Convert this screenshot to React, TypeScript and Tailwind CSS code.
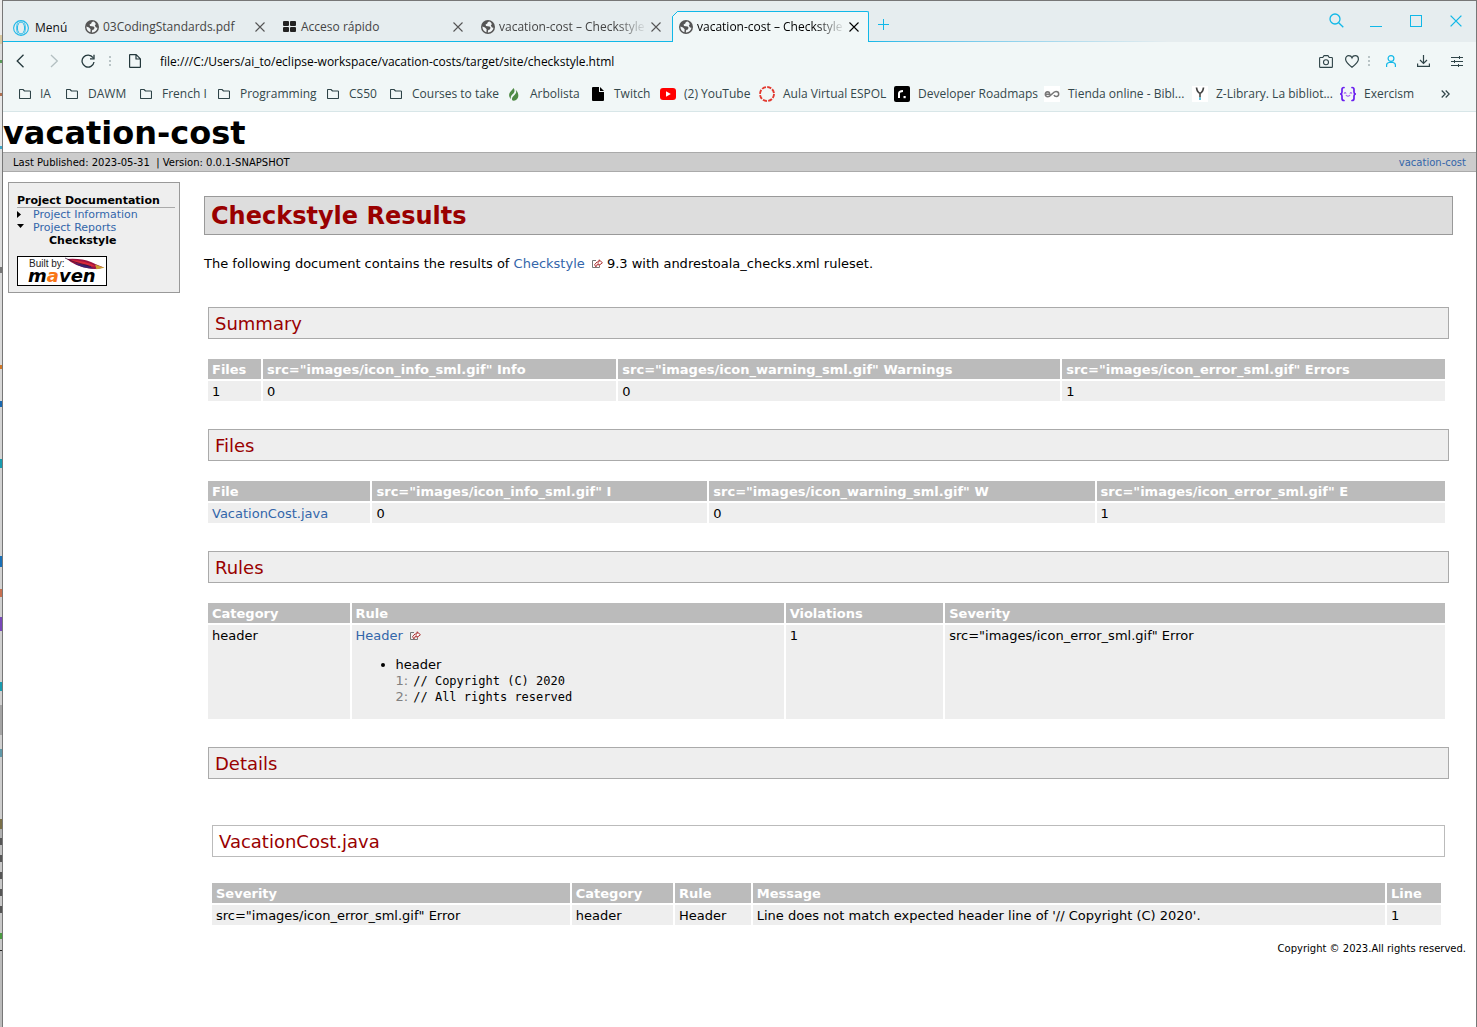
import React from "react";

/* ---------- icons ---------- */

function GlobeIcon() {
  return (
    <svg width="14" height="14" viewBox="0 0 14 14">
      <circle cx="7" cy="7" r="7" fill="#555" />
      <path d="M8.500 1.600C7 1.800 6.400 2.600 6.300 3.600L4.600 4.600 5 6l3.600.4 1 1.400-.8 1.600-1.600.6-.4 2.400c3 .3 5.300-1.800 5.700-4.600L11 7.400 9.800 5.600l1-1.400C10.400 2.900 9.600 2 8.500 1.600z" fill="#f1f5f6" />
      <path d="M1.400 6.400L4 7.600l1.600 1.600-.2 3C3 11.500 1.300 9.300 1.400 6.400z" fill="#f1f5f6" />
    </svg>
  );
}

function OperaIcon() {
  return (
    <svg width="16" height="16" viewBox="0 0 16 16" fill="none" stroke="#1fb8e8">
      <circle cx="8" cy="8" r="7.4" strokeWidth="1.1" />
      <ellipse cx="8" cy="8" rx="3.6" ry="6" strokeWidth="1" />
      <path d="M6 1.2C2.600 3.500 2.600 12.500 6 14.800M10 1.200c3.400 2.300 3.400 11.300 0 13.600" strokeWidth="0.700" />
    </svg>
  );
}

function CloseIcon({ size = 10, color = "#444" }: { size?: number; color?: string }) {
  return (
    <svg width={size} height={size} viewBox="0 0 10 10" stroke={color} strokeWidth="1.1">
      <path d="M.5.5l9 9M9.500.5l-9 9" />
    </svg>
  );
}

function SpeedDialIcon() {
  return (
    <svg width="13" height="12" viewBox="0 0 13 12" fill="#222">
      <rect width="6" height="5" rx="1" />
      <rect x="7" width="6" height="5" rx="1" />
      <rect y="6" width="6" height="5" rx="1" />
      <rect x="7" y="6" width="6" height="5" rx="1" />
    </svg>
  );
}

function FolderIcon() {
  return (
    <svg width="12" height="10" viewBox="0 0 12 10" fill="none" stroke="#2f4448" strokeWidth="1.1" strokeLinejoin="round">
      <path d="M.5 1.100Q.5.5 1.100.5H4l1.500 1.500h5.400q.6 0 .6.600v6.300q0 .6-.6.600H1.100q-.6 0-.6-.6z" />
    </svg>
  );
}

function LeafIcon() {
  return (
    <svg width="10" height="13" viewBox="0 0 10 13" fill="#4f8a45">
      <path d="M4.500 0C6 2 6 4 3.500 6.200 1.500 8 1.600 9.500 2 11 .2 9.500-.4 7.200.6 5 1.500 3 3.500 2 4.500 0z" />
      <path d="M6.600 1.800c1.200 2.200.6 3.700-1.600 5.600C3 9.200 2.700 10.500 3.200 12.300 5 13.200 7.700 12.200 8.900 9.700 9.900 7.500 9.200 4 6.600 1.800z" />
    </svg>
  );
}

function BlackPageIcon() {
  return (
    <svg width="12" height="14" viewBox="0 0 12 14" fill="#000">
      <path d="M0 1q0-1 1-1h6v5h5v8q0 1-1 1H1q-1 0-1-1z" />
      <path d="M8 0l4 4H8z" />
    </svg>
  );
}

function YouTubeIcon() {
  return (
    <svg width="16" height="12" viewBox="0 0 16 12">
      <rect width="16" height="12" rx="3" fill="#f00" />
      <path d="M6 3.300v5.400L10.800 6z" fill="#fff" />
    </svg>
  );
}

function DashedRingIcon() {
  return (
    <svg width="16" height="16" viewBox="0 0 16 16" fill="none">
      <circle cx="8" cy="8" r="7" stroke="#e23a30" strokeWidth="1.900" strokeDasharray="4.200 1.300" />
    </svg>
  );
}

function RoadmapIcon() {
  return (
    <svg width="16" height="16" viewBox="0 0 16 16">
      <rect width="16" height="16" rx="2" fill="#000" />
      <path d="M5 12V7.500Q5 5 9 5" fill="none" stroke="#fff" strokeWidth="2" />
      <rect x="9.500" y="10" width="2.200" height="2.200" fill="#fff" />
    </svg>
  );
}

function LoopIcon() {
  return (
    <svg width="16" height="16" viewBox="0 0 16 16" fill="none" stroke="#777" strokeWidth="1.500">
      <rect width="16" height="16" fill="#fff" stroke="none" />
      <path d="M1.500 8.300h4.200Q5.700 5.700 3.600 5.700 1.300 5.800 1.300 8.300q0 2.400 2.500 2.400C7.500 10.700 8.500 5.500 12 5.500q2.700 0 2.700 2.500 0 2.400-2.200 2.400Q10.500 10.400 10 9" />
    </svg>
  );
}

function ZLibIcon() {
  return (
    <svg width="16" height="16" viewBox="0 0 16 16" fill="none">
      <rect width="16" height="16" fill="#fff" />
      <path d="M4.500 1.500Q5 6 8 7.500 11 6 11.500 1.500" stroke="#444" strokeWidth="1.700" />
      <path d="M8 7v4.500" stroke="#555" strokeWidth="1.700" />
      <path d="M8 11.500V14" stroke="#3fb8d8" strokeWidth="1.700" />
    </svg>
  );
}

function ExercismIcon() {
  return (
    <svg width="16" height="16" viewBox="0 0 16 16" fill="none" stroke="#6a1fef" strokeWidth="1.700" strokeLinecap="round">
      <path d="M4 1.500q-2 0-2 2V6q0 1.500-1.300 2Q2 8.500 2 10v2.500q0 2 2 2M12 1.500q2 0 2 2V6q0 1.500 1.300 2-1.300.5-1.300 2v2.500q0 2-2 2" />
      <path d="M4.300 7.200q.8-1.200 1.600 0M10.100 7.200q.8-1.200 1.600 0M6.200 9.400q1.800 1.500 3.600 0" stroke="#a35cf3" strokeWidth="1.100" />
    </svg>
  );
}

function DotsIcon() {
  return (
    <svg width="2" height="10" viewBox="0 0 2 10" fill="#b9c4c6">
      <rect width="2" height="2" />
      <rect y="4" width="2" height="2" />
      <rect y="8" width="2" height="2" />
    </svg>
  );
}

function ExternalIcon() {
  return (
    <svg className="ml-[7px] inline-block align-baseline" width="11" height="9" viewBox="0 0 11 9" fill="none">
      <path d="M4 1.500H.5v7h7V7" stroke="#777" />
      <path d="M3.500 7.500L2.700 5.500 5 3h2V.8l3.400 2.900L7 6.500V5H5.500L4.300 7.500z" stroke="#a01515" strokeWidth="0.900" fill="#fff" />
    </svg>
  );
}

/* ---------- browser chrome ---------- */

function Tab({ title, icon, active = false, fade = false }: { title: string; icon: React.ReactNode; active?: boolean; fade?: boolean }) {
  return (
    <div
      className={
        active
          ? "relative mt-[10px] flex h-[31px] w-[197px] items-center rounded-tr-[2px] border-x border-t border-[#11b8e8] bg-[#f1f7f7] pl-[6px]"
          : "flex h-[41px] w-[198px] items-center border-b border-[#11b8e8] pt-[11px] pl-[9px]"
      }
    >
      {active && (
        <svg className="absolute -top-px -left-px" width="6" height="6" viewBox="0 0 6 6">
          <path d="M0 0h6L0 6z" fill="#e6edef" />
          <path d="M.5 6V5.500l5-5H6" stroke="#11b8e8" fill="none" />
        </svg>
      )}
      <span className="flex w-4 shrink-0">{icon}</span>
      <button
        className={
          "ml-[2px] h-5 w-[148px] shrink-0 text-left text-xs leading-5 whitespace-nowrap " +
          (active ? "text-black " : "text-[#444] ") +
          (fade ? "[mask-image:linear-gradient(to_right,#000_80%,transparent)]" : "")
        }
      >
        {title}
      </button>
      <button aria-label="Cerrar pestaña" className="ml-1 flex">
        <CloseIcon color={active ? "#000" : "#555"} />
      </button>
    </div>
  );
}

function TitleBar() {
  return (
    <div className="flex h-[41px] bg-[#e6edef]">
      <button className="flex w-[73px] items-center gap-[6px] border-b border-[#11b8e8] pt-[13px] pl-[10px] text-xs text-[#111]">
        <OperaIcon />
        Menú
      </button>
      <Tab title="03CodingStandards.pdf" icon={<GlobeIcon />} />
      <Tab title="Acceso rápido" icon={<SpeedDialIcon />} />
      <Tab title="vacation-cost – Checkstyle" icon={<GlobeIcon />} fade />
      <div className="w-[2px] border-b border-[#11b8e8]" />
      <Tab title="vacation-cost – Checkstyle" icon={<GlobeIcon />} active fade />
      <div className="flex grow flex-col">
        <div className="flex h-10 items-start">
          <button aria-label="Nueva pestaña" className="mt-[18px] ml-[9px]">
            <svg width="11" height="11" viewBox="0 0 11 11" stroke="#11b8e8"><path d="M5.500 0v11M0 5.500h11" /></svg>
          </button>
          <div className="mt-3 mr-[14px] ml-auto flex">
            <button aria-label="Buscar" className="mr-[26px]">
              <svg width="15" height="15" viewBox="0 0 15 15" fill="none" stroke="#11b8e8" strokeWidth="1.300">
                <circle cx="6" cy="6" r="5" />
                <path d="M9.700 9.700l4.600 4.600" />
              </svg>
            </button>
            <button aria-label="Minimizar" className="mr-[28px]">
              <svg width="12" height="15" viewBox="0 0 12 15" stroke="#11b8e8"><path d="M0 13.500h12" /></svg>
            </button>
            <button aria-label="Maximizar" className="mr-[28px]">
              <svg width="12" height="15" viewBox="0 0 12 15" fill="none" stroke="#11b8e8"><rect x=".5" y="2.500" width="11" height="11" /></svg>
            </button>
            <button aria-label="Cerrar">
              <CloseIcon size={12} color="#11b8e8" />
            </button>
          </div>
        </div>
        <div className="h-px w-[300px] bg-linear-to-r from-[#11b8e8] to-[#e6edef]" />
      </div>
    </div>
  );
}

function AddressBar() {
  return (
    <div className="flex h-[38px] items-center bg-[#f1f7f7] pr-[13px] pl-[13px] text-[#2f4448]">
      <button aria-label="Atrás">
        <svg width="9" height="14" viewBox="0 0 9 14" fill="none" stroke="#24383c" strokeWidth="1.300"><path d="M7.500.7L1.200 7l6.300 6.300" /></svg>
      </button>
      <button aria-label="Adelante" className="ml-[25px]">
        <svg width="9" height="14" viewBox="0 0 9 14" fill="none" stroke="#b3bfc1" strokeWidth="1.300"><path d="M1 1l6.300 6L1 13" /></svg>
      </button>
      <button aria-label="Recargar" className="ml-[22px]">
        <svg width="14" height="14" viewBox="0 0 14 14" fill="none" stroke="#24383c" strokeWidth="1.300">
          <path d="M12 3.700A6 6 0 1 0 13 8M13 .8v4H9" />
        </svg>
      </button>
      <span className="ml-[14px]"><DotsIcon /></span>
      <svg className="ml-[18px]" width="12" height="14" viewBox="0 0 12 14" fill="none" stroke="#24383c" strokeWidth="1.200" strokeLinejoin="round">
        <path d="M.6 1q0-.4.4-.4h6.200l4.200 4.200V13q0 .4-.4.400H1q-.4 0-.4-.4zM7 .6V5h4.400" />
      </svg>
      <input
        aria-label="Dirección"
        readOnly
        className="mx-[19px] h-6 min-w-0 grow bg-transparent text-xs text-black outline-none"
        value="file:///C:/Users/ai_to/eclipse-workspace/vacation-costs/target/site/checkstyle.html"
      />
      <button aria-label="Captura">
        <svg width="14" height="13" viewBox="0 0 14 13" fill="none" stroke="#2f4448" strokeWidth="1.100" strokeLinejoin="round">
          <path d="M.6 3.200q0-.7.700-.7h2.500L5 .6h4l1.200 1.900h2.500q.7 0 .7.700v8.500q0 .7-.7.700H1.300q-.7 0-.7-.7z" />
          <circle cx="7" cy="7.300" r="2.500" />
        </svg>
      </button>
      <button aria-label="Favorito" className="ml-[12px]">
        <svg width="14" height="13" viewBox="0 0 14 13" fill="none" stroke="#2f4448" strokeWidth="1.200">
          <path d="M7 12.200C3.500 9.500.6 7.200.6 4.200.6 2.200 2 .7 3.800.7 5.200.7 6.500 1.500 7 2.800 7.500 1.500 8.800.7 10.200.7 12 .7 13.400 2.200 13.400 4.200c0 3-2.900 5.300-6.400 8z" />
        </svg>
      </button>
      <span className="ml-[9px]"><DotsIcon /></span>
      <button aria-label="Perfil" className="ml-[16px]">
        <svg width="10" height="12" viewBox="0 0 10 12" fill="none" stroke="#11b8e8" strokeWidth="1.200">
          <circle cx="5" cy="3.500" r="2.900" />
          <path d="M.6 12V10q0-2 2.400-2.500h4Q9.400 8 9.400 10v2" />
        </svg>
      </button>
      <button aria-label="Descargas" className="ml-[21px]">
        <svg width="13" height="12" viewBox="0 0 13 12" fill="none" stroke="#2f4448" strokeWidth="1.200">
          <path d="M6.500 0v8.300M3 5l3.500 3.500L10 5M.6 8.500v2.900h11.800V8.500" />
        </svg>
      </button>
      <button aria-label="Configuración" className="ml-[21px]">
        <svg width="12" height="11" viewBox="0 0 12 11" stroke="#2f4448" strokeWidth="1">
          <path d="M0 1.500h12M0 5.500h12M0 9.500h12M8.500 0v3M3.500 4v3M7.500 8v3" />
        </svg>
      </button>
    </div>
  );
}

const bookmarks = [
  { label: "IA", icon: <FolderIcon />, w: "w-[47px]", t: "w-[21px]" },
  { label: "DAWM", icon: <FolderIcon />, w: "w-[74px]", t: "w-[22px]" },
  { label: "French I", icon: <FolderIcon />, w: "w-[78px]", t: "w-[22px]" },
  { label: "Programming", icon: <FolderIcon />, w: "w-[109px]", t: "w-[22px]" },
  { label: "CS50", icon: <FolderIcon />, w: "w-[63px]", t: "w-[22px]" },
  { label: "Courses to take", icon: <FolderIcon />, w: "w-[119px]", t: "w-[22px]" },
  { label: "Arbolista", icon: <LeafIcon />, w: "w-[83px]", t: "w-[21px]" },
  { label: "Twitch", icon: <BlackPageIcon />, w: "w-[68px]", t: "w-[22px]" },
  { label: "(2) YouTube", icon: <YouTubeIcon />, w: "w-[99px]", t: "w-6" },
  { label: "Aula Virtual ESPOL", icon: <DashedRingIcon />, w: "w-[135px]", t: "w-6" },
  { label: "Developer Roadmaps", icon: <RoadmapIcon />, w: "w-[150px]", t: "w-6" },
  { label: "Tienda online - Bibl...", icon: <LoopIcon />, w: "w-[148px]", t: "w-6" },
  { label: "Z-Library. La bibliot...", icon: <ZLibIcon />, w: "w-[148px]", t: "w-6" },
  { label: "Exercism", icon: <ExercismIcon />, w: "w-[80px]", t: "w-6" },
];

function BookmarksBar() {
  return (
    <div className="flex h-8 items-center border-b border-[#d8e6e8] bg-[#f1f7f7] pb-[3px] pl-4 text-xs whitespace-nowrap text-[#34474b]">
      {bookmarks.map((b) => (
        <a key={b.label} href="#" className={"flex shrink-0 items-center " + b.w}>
          <span className={"shrink-0 " + b.t}>{b.icon}</span>
          {b.label}
        </a>
      ))}
      <button aria-label="Más marcadores" className="mr-[26px] ml-auto">
        <svg width="9" height="8" viewBox="0 0 9 8" fill="none" stroke="#2f4448" strokeWidth="1.200"><path d="M.7.5L4.200 4 .7 7.500M4.700.5L8.200 4 4.700 7.500" /></svg>
      </button>
    </div>
  );
}

/* ---------- report page ---------- */

const link = "text-[#36a] no-underline";

function MavenBadge() {
  return (
    <a href="#" aria-label="Built by Maven" className="mt-[9px] block w-[90px]">
      <svg width="90" height="30" viewBox="0 0 90 30">
        <rect x=".5" y=".5" width="89" height="29" fill="#fff" stroke="#000" />
        <text x="12" y="11" fontFamily="Liberation Sans, sans-serif" fontSize="10" fill="#222">Built by:</text>
        <path d="M50 3q14-1 24 3 8 3.500 13 5.500-8 2.500-17 .5Q57 9.500 50 3z" fill="#a01440" />
        <path d="M53 4q15 0 26 6.500-13 0-20-3.500z" fill="#d8283c" />
        <path d="M57 7q8 5.500 20 5.500L70 9z" fill="#3c2070" />
        <path d="M78 8.500l9.500 3.300-8 1.500z" fill="#c9a030" />
        <path d="M48 2l8 3.500 18 5" fill="none" stroke="#301030" strokeWidth=".7" />
        <text x="11" y="26" fontFamily="DejaVu Sans, sans-serif" fontSize="18" fontWeight="700" fontStyle="italic" fill="#000">
          m<tspan fill="#f87414">a</tspan>ven
        </text>
      </svg>
    </a>
  );
}

function Sidebar() {
  return (
    <nav className="w-[172px] shrink-0 self-start border border-[#999] bg-[#eee] px-2 pt-[11px] pb-[6px] text-[11px] leading-[13px]">
      <h5 className="mr-[-4px] border-b border-[#aaa] font-bold">Project Documentation</h5>
      <ul>
        <li className="flex items-center">
          <svg width="4" height="7" viewBox="0 0 4 7"><path d="M0 0l4 3.500L0 7z" /></svg>
          <a href="#" className={"ml-3 " + link}>Project Information</a>
        </li>
        <li className="flex items-center">
          <svg className="mb-[3px]" width="7" height="4" viewBox="0 0 7 4"><path d="M0 0h7L3.500 4z" /></svg>
          <a href="#" className={"ml-[9px] " + link}>Project Reports</a>
        </li>
        <li className="pl-8 font-bold">Checkstyle</li>
      </ul>
      <MavenBadge />
    </nav>
  );
}

type Column = { head: string; w: string };

function DataTable({ columns, cells }: { columns: Column[]; cells: React.ReactNode[] }) {
  return (
    <div className="-my-[2px] mr-[2px] -ml-[2px]">
      <table className="w-full table-fixed border-separate border-spacing-[2px] text-[13px] leading-4">
        <colgroup>
          {columns.map((c) => <col key={c.head} className={c.w} />)}
        </colgroup>
        <thead>
          <tr>
            {columns.map((c) => (
              <th key={c.head} scope="col" className="bg-[#bbb] px-1 pt-[3px] pb-px text-left font-bold whitespace-nowrap text-white">{c.head}</th>
            ))}
          </tr>
        </thead>
        <tbody>
          <tr>
            {cells.map((cell, i) => (
              <td key={i} className="bg-[#eee] px-1 pt-[3px] pb-px align-top">{cell}</td>
            ))}
          </tr>
        </tbody>
      </table>
    </div>
  );
}

function Section({ title, children }: { title: string; children?: React.ReactNode }) {
  return (
    <section className="mx-1 mb-7">
      <h2 className="mb-5 border border-[#aaa] bg-[#eee] px-[6px] pt-[5px] pb-[3px] text-lg leading-[22px] text-[#900]">{title}</h2>
      {children}
    </section>
  );
}

function CodeLine({ n, text }: { n: number; text: string }) {
  return (
    <div className="flex h-4 items-center gap-[5px]">
      <span className="text-[#808080]">{n}:</span>
      <code className="font-['DejaVu_Sans_Mono',monospace] text-xs leading-4">{text}</code>
    </div>
  );
}

function Report() {
  return (
    <main className="mt-[14px] ml-6 min-w-0 grow text-[13px] leading-4">
      <h1 className="border border-[#999] bg-[#ddd] px-[6px] pt-1 pb-[2px] text-2xl leading-[31px] font-bold text-[#900]">Checkstyle Results</h1>
      <p className="mt-[21px] mb-[35px]">
        The following document contains the results of <a href="#" className={link}>Checkstyle<ExternalIcon /></a> 9.3 with andrestoala_checks.xml ruleset.
      </p>

      <Section title="Summary">
        <DataTable
          columns={[
            { head: "Files", w: "w-[53px]" },
            { head: 'src="images/icon_info_sml.gif" Info', w: "w-[28.7%]" },
            { head: 'src="images/icon_warning_sml.gif" Warnings', w: "w-[35.9%]" },
            { head: 'src="images/icon_error_sml.gif" Errors', w: "w-auto" },
          ]}
          cells={["1", "0", "0", "1"]}
        />
      </Section>

      <Section title="Files">
        <DataTable
          columns={[
            { head: "File", w: "w-[13.2%]" },
            { head: 'src="images/icon_info_sml.gif" I', w: "w-[27.2%]" },
            { head: 'src="images/icon_warning_sml.gif" W', w: "w-[31.3%]" },
            { head: 'src="images/icon_error_sml.gif" E', w: "w-auto" },
          ]}
          cells={[<a href="#" className={link}>VacationCost.java</a>, "0", "0", "1"]}
        />
      </Section>

      <Section title="Rules">
        <DataTable
          columns={[
            { head: "Category", w: "w-[11.5%]" },
            { head: "Rule", w: "w-[35.1%]" },
            { head: "Violations", w: "w-[12.8%]" },
            { head: "Severity", w: "w-auto" },
          ]}
          cells={[
            "header",
            <>
              <a href="#" className={link}>Header<ExternalIcon /></a>
              <ul className="mt-[13px] mb-[13px] list-disc pl-10">
                <li>
                  header
                  <CodeLine n={1} text="// Copyright (C) 2020" />
                  <CodeLine n={2} text="// All rights reserved" />
                </li>
              </ul>
            </>,
            "1",
            'src="images/icon_error_sml.gif" Error',
          ]}
        />
      </Section>

      <Section title="Details">
        <section className="mx-1 mt-[46px]">
          <h3 className="mb-[26px] border border-[#bbb] px-[6px] pt-[5px] pb-[3px] text-lg leading-[22px] text-[#900]">VacationCost.java</h3>
          <DataTable
            columns={[
              { head: "Severity", w: "w-[29.3%]" },
              { head: "Category", w: "w-[8.3%]" },
              { head: "Rule", w: "w-[6.2%]" },
              { head: "Message", w: "w-auto" },
              { head: "Line", w: "w-[54px]" },
            ]}
            cells={[
              'src="images/icon_error_sml.gif" Error',
              "header",
              "Header",
              "Line does not match expected header line of '// Copyright (C) 2020'.",
              "1",
            ]}
          />
        </section>
      </Section>
    </main>
  );
}

/* sliver of the window that sits behind the browser's left edge */
const sliver = [
  "h-[35px] bg-[#ececec]", "h-[9px] bg-[#d8c8a0]", "h-[16px] bg-[#dcdcdc]", "h-[3px] bg-[#5a9a5a]", "h-[30px] bg-[#dcdcdc]",
  "h-[3px] bg-[#b07050]", "h-[50px] bg-[#e8e8e8]", "h-[3px] bg-[#40a8c8]", "h-[118px] bg-[#dedede]", "h-[6px] bg-[#777]",
  "h-[92px] bg-[#dadada]", "h-[4px] bg-[#d07828]", "h-[32px] bg-[#d8d8d8]", "h-[6px] bg-[#1868b0]", "h-[52px] bg-[#d4d4d4]",
  "h-[9px] bg-[#189cb0]", "h-[88px] bg-[#d2d2d2]", "h-[11px] bg-[#1870b8]", "h-[22px] bg-[#d2d2d2]", "h-[8px] bg-[#c87050]",
  "h-[20px] bg-[#d0d0d0]", "h-[14px] bg-[#7848b8]", "h-[51px] bg-[#d0d0d0]", "h-[9px] bg-[#189cb0]", "h-[14px] bg-[#d0d0d0]",
  "h-[30px] bg-[#a4a4a4]", "h-[14px] bg-[#d0d0d0]", "h-[8px] bg-[#6098a8]", "h-[62px] bg-[#cecece]", "h-[10px] bg-[#7a7048]",
  "h-[9px] bg-[#b0b0b0]", "h-[7px] bg-[#555]", "h-[10px] bg-[#c0c0c0]", "h-[7px] bg-[#555]", "h-[10px] bg-[#c8c8c8]",
  "h-[7px] bg-[#555]", "h-[10px] bg-[#c8c8c8]", "h-[7px] bg-[#555]", "h-[10px] bg-[#c8c8c8]", "h-[7px] bg-[#555]",
  "h-[20px] bg-[#c8c8c8]", "h-[6px] bg-[#4a9a40]", "h-[11px] bg-[#c8c8c8]", "h-[1px] bg-[#222]", "grow bg-[#bbb]",
];

export default function App() {
  return (
    <div className="flex min-h-screen bg-white text-black">
      <div className="flex w-[2px] shrink-0 flex-col">
        {sliver.map((c, i) => <div key={i} className={"shrink-0 " + c} />)}
      </div>
      <div className="min-w-0 grow border-x border-t border-[#777] font-['DejaVu_Sans',Verdana,sans-serif]">
        <header className="font-['Open_Sans','Noto_Sans',sans-serif]">
          <TitleBar />
          <AddressBar />
          <BookmarksBar />
        </header>
        <div className="h-10 text-[32px] leading-[42px] font-bold">vacation-cost</div>
        <div className="flex h-5 items-center justify-between border-y border-[#aaa] bg-[#ccc] px-[10px] pt-[2px] text-[10px] leading-4">
          <span className="whitespace-pre">Last Published: 2023-05-31  | Version: 0.0.1-SNAPSHOT</span>
          <a href="#" className={link}>vacation-cost</a>
        </div>
        <div className="mt-[10px] flex pr-[23px] pl-[5px]">
          <Sidebar />
          <Report />
        </div>
        <footer className="-mt-3 pr-[10px] text-right text-[10px] leading-4">Copyright © 2023.All rights reserved.</footer>
      </div>
    </div>
  );
}
